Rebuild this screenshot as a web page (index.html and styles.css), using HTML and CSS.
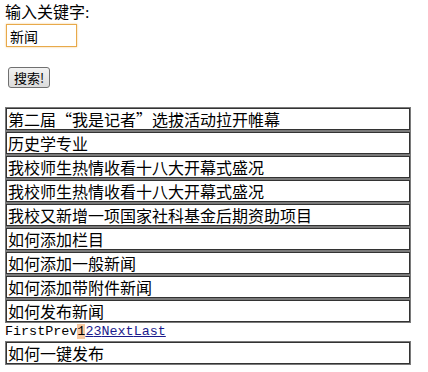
FILE: index.html
```html
<!DOCTYPE html>
<html lang="zh-CN">
<head>
  <meta charset="UTF-8" />
  <title>新闻搜索</title>
  <link rel="stylesheet" href="styles.css">
</head>
<body>
  <form class="search">
    <label for="kw">输入关键字:</label>
    <input type="text" id="kw" class="kw" value="新闻">
    <button type="button" class="go">搜索!</button>
  </form>

  <div class="list">
    <table class="news"><tr><td>第二届“我是记者”选拔活动拉开帷幕</td></tr></table>
    <table class="news"><tr><td>历史学专业</td></tr></table>
    <table class="news"><tr><td>我校师生热情收看十八大开幕式盛况</td></tr></table>
    <table class="news"><tr><td>我校师生热情收看十八大开幕式盛况</td></tr></table>
    <table class="news"><tr><td>我校又新增一项国家社科基金后期资助项目</td></tr></table>
    <table class="news"><tr><td>如何添加栏目</td></tr></table>
    <table class="news"><tr><td>如何添加一般新闻</td></tr></table>
    <table class="news"><tr><td>如何添加带附件新闻</td></tr></table>
    <table class="news"><tr><td>如何发布新闻</td></tr></table>
  </div>

  <div class="pager">FirstPrev<span class="cur">1</span><a href="#">2</a><a href="#">3</a><a href="#">Next</a><a href="#">Last</a></div>

  <div class="list">
    <table class="news"><tr><td>如何一键发布</td></tr></table>
  </div>
</body>
</html>
```

FILE: styles.css
```css
body {
  margin: 0;
  padding: 4px 5px;
  background: white;
  color: black;
  font-family: "Liberation Serif", "Noto Sans CJK SC", serif;
  font-size: 16px;
}

.search {
  display: flex;
  flex-direction: column;
  align-items: flex-start;
}

.search label {
  line-height: 18px;
}

.kw {
  margin: 2px 0 0 1px;
  width: 63px;
  height: 19px;
  padding: 1px 3px;
  border: 1px solid #e8a94a;
  box-shadow: 0 0 2px #f3c987;
  font-family: "Noto Sans CJK SC", sans-serif;
  font-size: 14px;
  outline: none;
}

.go {
  margin: 20px 0 0 3px;
  height: 21px;
  padding: 0 5px;
  border: 1px solid #707070;
  border-radius: 3px;
  background: linear-gradient(#f2f2f2, #dcdcdc);
  font-family: "Noto Sans CJK SC", sans-serif;
  font-size: 13px;
  line-height: 17px;
}

.list {
  margin-top: 19px;
}

.pager + .list {
  margin-top: 0;
}

.news {
  width: 406px;
  border: 1px solid #7a7a7a;
  border-spacing: 0;
}

.news td {
  border: 1px solid #333;
  padding: 0 0 0 1px;
  height: 20px;
  line-height: 20px;
  font-family: "Noto Sans CJK SC", sans-serif;
  font-size: 16px;
}

.pager {
  font-family: "Liberation Mono", monospace;
  font-size: 13.4px;
  line-height: 18px;
}

.pager .cur {
  background: #f7c9a3;
}

.pager a {
  color: #1a1a8c;
}
```
